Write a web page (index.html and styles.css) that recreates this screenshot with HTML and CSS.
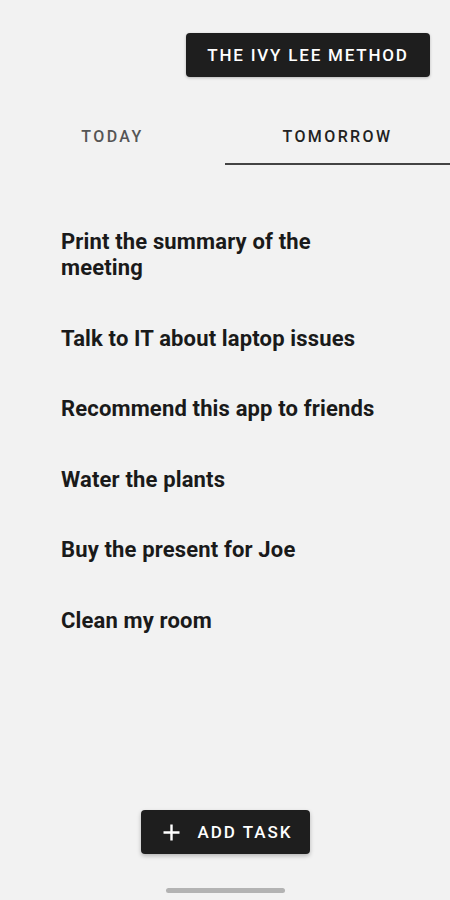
FILE: index.html
```html
<!DOCTYPE html>
<html lang="en">
<head>
    <meta charset="UTF-8">
    <meta name="viewport" content="width=device-width, initial-scale=1.0">
    <title>The Ivy Lee Method</title>
    <link rel="stylesheet" href="styles.css">
</head>
<body>

    <div class="screen">
        <div class="top-bar">
            <button class="method-btn">THE IVY LEE METHOD</button>
        </div>

        <div class="tabs">
            <div class="tab">TODAY</div>
            <div class="tab active">TOMORROW</div>
        </div>

        <ul class="task-list">
            <li>Print the summary of the meeting</li>
            <li>Talk to IT about laptop issues</li>
            <li>Recommend this app to friends</li>
            <li>Water the plants</li>
            <li>Buy the present for Joe</li>
            <li>Clean my room</li>
        </ul>

        <div class="bottom">
            <button class="add-btn">
                <svg width="17" height="17" viewBox="0 0 17 17">
                    <path d="M8.5 0.5v16M0.5 8.5h16" stroke="#fff" stroke-width="2.4" fill="none"/>
                </svg>
                <span>ADD TASK</span>
            </button>
            <div class="home-bar"></div>
        </div>
    </div>

</body>
</html>
```

FILE: styles.css
```css
body {
    margin: 0;
    padding: 0;
    background-color: #f2f2f2;
    font-family: Roboto, "Liberation Sans", sans-serif;
}

.screen {
    width: 450px;
    height: 900px;
    display: flex;
    flex-direction: column;
}

.top-bar {
    display: flex;
    justify-content: flex-end;
    padding: 33px 20px 0 0;
}

.method-btn {
    width: 244px;
    height: 44px;
    padding: 0;
    background-color: #1e1e1e;
    color: #fff;
    border: none;
    border-radius: 4px;
    font-family: inherit;
    font-size: 17px;
    font-weight: 500;
    letter-spacing: 1.8px;
    box-shadow: 0 1px 3px rgba(0, 0, 0, 0.25);
}

.tabs {
    display: flex;
    margin-top: 33px;
}

.tab {
    flex: 1;
    text-align: center;
    height: 55px;
    line-height: 54px;
    font-size: 16px;
    font-weight: 500;
    letter-spacing: 2.4px;
    color: #555;
    box-sizing: border-box;
}

.tab.active {
    color: #222;
    border-bottom: 2px solid #444;
}

.task-list {
    list-style: none;
    margin: 64px 0 0 0;
    padding: 0 61px;
    display: flex;
    flex-direction: column;
    gap: 44.6px;
}

.task-list li {
    font-size: 22px;
    font-weight: 700;
    line-height: 26px;
    letter-spacing: 0.15px;
    color: #1a1a1a;
}

.bottom {
    margin-top: auto;
    display: flex;
    flex-direction: column;
    align-items: center;
    padding-bottom: 7px;
}

.add-btn {
    display: flex;
    align-items: center;
    gap: 17px;
    height: 44px;
    padding: 0 17px 0 22px;
    margin-left: 1px;
    background-color: #1e1e1e;
    color: #fff;
    border: none;
    border-radius: 4px;
    font-family: inherit;
    font-size: 17px;
    font-weight: 500;
    letter-spacing: 2px;
    box-shadow: 0 2px 4px rgba(0, 0, 0, 0.25);
}

.home-bar {
    width: 119px;
    height: 5px;
    border-radius: 3px;
    background-color: #b3b3b3;
    margin-top: 34px;
    margin-left: 1px;
}
```
